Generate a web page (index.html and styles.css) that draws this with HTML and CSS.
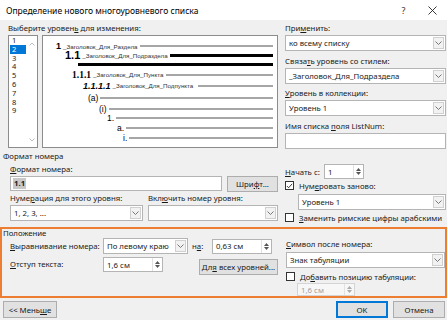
FILE: index.html
```html
<!DOCTYPE html>
<html lang="ru">
<head>
  <meta charset="UTF-8">
  <title>Определение нового многоуровневого списка</title>
  <link rel="stylesheet" href="styles.css">
</head>
<body>
  <div class="dialog">
    <div class="titlebar">
      <div class="title">Определение нового многоуровневого списка</div>
      <div class="tb-btn">?</div>
      <div class="tb-btn">
        <svg width="9" height="9" viewBox="0 0 9 9"><path d="M0.5 0.5 L8.5 8.5 M8.5 0.5 L0.5 8.5" stroke="#222" stroke-width="0.9"/></svg>
      </div>
    </div>

    <!-- выбор уровня и просмотр -->
    <div class="top">
      <div class="pick">
        <div class="caption">Выберите уровен<u>ь</u> для изменения:</div>
        <div class="pick-body">
          <div class="levels">
            <div class="level-items">
              <div class="lv">1</div>
              <div class="lv selected">2</div>
              <div class="lv">3</div>
              <div class="lv">4</div>
              <div class="lv">5</div>
              <div class="lv">6</div>
              <div class="lv">7</div>
              <div class="lv">8</div>
              <div class="lv">9</div>
            </div>
            <div class="scroll">
              <svg width="6" height="4" viewBox="0 0 6 4"><path d="M0.5 3.5 L3 1 L5.5 3.5" fill="none" stroke="#bdbdbd"/></svg>
              <svg width="6" height="4" viewBox="0 0 6 4"><path d="M0.5 0.5 L3 3 L5.5 0.5" fill="none" stroke="#bdbdbd"/></svg>
            </div>
          </div>
          <div class="preview">
            <div class="pv pv1"><b class="n1">1</b><span class="sty s1">_Заголовок_Для_Раздела</span><span class="ln"></span></div>
            <div class="pv pv2"><b class="n2">1.1</b><span class="sty s2">_Заголовок_Для_Подраздела</span><span class="ln thick"></span></div>
            <div class="pv pv3"><span class="ln thick"></span></div>
            <div class="pv pv4"><b class="n3">1.1.1</b><span class="sty s4">_Заголовок_Для_Пункта</span><span class="ln"></span></div>
            <div class="pv pv5"><b class="n4">1.1.1.1</b><span class="sty s5">_Заголовок_Для_Подпункта</span><span class="ln"></span></div>
            <div class="pv pv6"><span class="n">(a)</span><span class="ln"></span></div>
            <div class="pv pv7"><span class="n">(i)</span><span class="ln"></span></div>
            <div class="pv pv8"><span class="n">1.</span><span class="ln"></span></div>
            <div class="pv pv9"><span class="n">a.</span><span class="ln"></span></div>
            <div class="pv pv10"><span class="n">i.</span><span class="ln"></span></div>
          </div>
        </div>
      </div>

      <div class="side">
        <div class="field">
          <div class="caption">При<u>м</u>енить:</div>
          <div class="combo"><span class="val">ко всему списку</span><span class="drop"><svg width="7" height="4" viewBox="0 0 7 4"><path d="M0.5 0.5 L3.5 3.5 L6.5 0.5" fill="none" stroke="#777"/></svg></span></div>
        </div>
        <div class="field">
          <div class="caption">Связа<u>т</u>ь уровень со стилем:</div>
          <div class="combo"><span class="val">_Заголовок_Для_Подраздела</span><span class="drop"><svg width="7" height="4" viewBox="0 0 7 4"><path d="M0.5 0.5 L3.5 3.5 L6.5 0.5" fill="none" stroke="#777"/></svg></span></div>
        </div>
        <div class="field">
          <div class="caption"><u>У</u>ровень в коллекции:</div>
          <div class="combo"><span class="val">Уровень 1</span><span class="drop"><svg width="7" height="4" viewBox="0 0 7 4"><path d="M0.5 0.5 L3.5 3.5 L6.5 0.5" fill="none" stroke="#777"/></svg></span></div>
        </div>
        <div class="field">
          <div class="caption">Имя списка <u>п</u>оля ListNum:</div>
          <div class="textbox"></div>
        </div>
      </div>
    </div>

    <!-- формат номера -->
    <div class="fmt">
      <div class="group-title">Формат номера</div>
      <div class="fmt-body">
        <div class="col">
          <div class="caption"><u>Ф</u>ормат номера:</div>
          <div class="fmt-row">
            <div class="textbox num-format"><span class="hl">1.1</span></div>
            <div class="btn font-btn"><span>Шри<u>ф</u>т...</span></div>
          </div>
          <div class="two">
            <div class="sub">
              <div class="caption small">Нуме<u>р</u>ация для этого уровня:</div>
              <div class="combo"><span class="val">1, 2, 3, ...</span><span class="drop"><svg width="7" height="4" viewBox="0 0 7 4"><path d="M0.5 0.5 L3.5 3.5 L6.5 0.5" fill="none" stroke="#777"/></svg></span></div>
            </div>
            <div class="sub">
              <div class="caption small">Вкл<u>ю</u>чить номер уровня:</div>
              <div class="combo"><span class="val"></span><span class="drop"><svg width="7" height="4" viewBox="0 0 7 4"><path d="M0.5 0.5 L3.5 3.5 L6.5 0.5" fill="none" stroke="#777"/></svg></span></div>
            </div>
          </div>
        </div>
        <div class="col">
          <div class="start-row">
            <span class="start-label"><u>Н</u>ачать с:</span>
            <div class="spin start-spin"><span class="val">1</span><span class="arrows"><svg width="5" height="3" viewBox="0 0 5 3"><path d="M0 3 L2.5 0 L5 3 Z" fill="#555"/></svg><svg width="5" height="3" viewBox="0 0 5 3"><path d="M0 0 L2.5 3 L5 0 Z" fill="#555"/></svg></span></div>
          </div>
          <div class="check-row first">
            <span class="box"><svg width="8" height="8" viewBox="0 0 8 8"><path d="M1 4 L3 6 L7 1.5" fill="none" stroke="#222" stroke-width="1"/></svg></span>
            <span>Нум<u>е</u>ровать заново:</span>
          </div>
          <div class="combo restart"><span class="val">Уровень 1</span><span class="drop"><svg width="7" height="4" viewBox="0 0 7 4"><path d="M0.5 0.5 L3.5 3.5 L6.5 0.5" fill="none" stroke="#777"/></svg></span></div>
          <div class="check-row second">
            <span class="box"></span>
            <span><u>З</u>аменить римские цифры арабскими</span>
          </div>
        </div>
      </div>
    </div>

    <!-- положение -->
    <div class="pos">
      <div class="group-title">Положение</div>
      <div class="pos-body">
        <div class="col">
          <div class="pos-row">
            <span class="pos-label"><u>В</u>ыравнивание номера:</span>
            <div class="combo align"><span class="val">По левому краю</span><span class="drop"><svg width="7" height="4" viewBox="0 0 7 4"><path d="M0.5 0.5 L3.5 3.5 L6.5 0.5" fill="none" stroke="#777"/></svg></span></div>
            <span class="at-label">н<u>а</u>:</span>
            <div class="spin"><span class="val">0,63 см</span><span class="arrows"><svg width="5" height="3" viewBox="0 0 5 3"><path d="M0 3 L2.5 0 L5 3 Z" fill="#555"/></svg><svg width="5" height="3" viewBox="0 0 5 3"><path d="M0 0 L2.5 3 L5 0 Z" fill="#555"/></svg></span></div>
          </div>
          <div class="pos-row second">
            <span class="pos-label"><u>О</u>тступ текста:</span>
            <div class="spin"><span class="val">1,6 см</span><span class="arrows"><svg width="5" height="3" viewBox="0 0 5 3"><path d="M0 3 L2.5 0 L5 3 Z" fill="#555"/></svg><svg width="5" height="3" viewBox="0 0 5 3"><path d="M0 0 L2.5 3 L5 0 Z" fill="#555"/></svg></span></div>
            <div class="btn all-btn"><span>Дл<u>я</u> всех уровней...</span></div>
          </div>
        </div>
        <div class="col">
          <div class="caption"><u>С</u>имвол после номера:</div>
          <div class="combo"><span class="val">Знак табуляции</span><span class="drop"><svg width="7" height="4" viewBox="0 0 7 4"><path d="M0.5 0.5 L3.5 3.5 L6.5 0.5" fill="none" stroke="#777"/></svg></span></div>
          <div class="check-row tab">
            <span class="box"></span>
            <span>До<u>б</u>авить позицию табуляции:</span>
          </div>
          <div class="spin disabled"><span class="val">1,6 см</span><span class="arrows"><svg width="5" height="3" viewBox="0 0 5 3"><path d="M0 3 L2.5 0 L5 3 Z" fill="#aaa"/></svg><svg width="5" height="3" viewBox="0 0 5 3"><path d="M0 0 L2.5 3 L5 0 Z" fill="#aaa"/></svg></span></div>
        </div>
      </div>
    </div>

    <div class="footer">
      <div class="btn less"><span>&lt;&lt; Мень<u>ш</u>е</span></div>
      <div class="spacer"></div>
      <div class="btn ok">OK</div>
      <div class="btn">Отмена</div>
    </div>
  </div>
</body>
</html>
```

FILE: styles.css
```css
* {
  box-sizing: border-box;
}
body {
  margin: 0;
  font-family: "Noto Sans", sans-serif;
  font-size: 7.8px;
  color: #1a1a1a;
  background-color: #f0f0f0;
}
u {
  text-decoration-thickness: 0.5px;
  text-underline-offset: 1px;
}
.dialog {
  width: 447px;
  height: 320px;
  background-color: #f0f0f0;
  overflow: hidden;
}
.titlebar {
  height: 20px;
  background-color: #fff;
  display: flex;
  align-items: center;
  padding-left: 6px;
  font-size: 8.5px;
  color: #000;
}
.titlebar .title {
  flex: 1;
}
.tb-btn {
  width: 29px;
  display: flex;
  justify-content: center;
  align-items: center;
  font-size: 9px;
  color: #333;
}
.caption {
  height: 13px;
  line-height: 13px;
  white-space: nowrap;
}

/* верхняя часть */
.top {
  display: flex;
  gap: 7px;
  height: 130px;
  padding: 2px 1px 0 8px;
}
.pick {
  width: 270px;
}
.pick-body {
  display: flex;
  gap: 4px;
  height: 113px;
}
.levels {
  width: 30px;
  background-color: #fff;
  border: 1px solid #8c8c8c;
  display: flex;
  padding: 0 0 0 1px;
}
.level-items {
  width: 16px;
}
.lv {
  height: 8.8px;
  line-height: 8.8px;
  padding-left: 2px;
  font-size: 7.5px;
}
.lv.selected {
  background-color: #0078d7;
  color: #fff;
}
.scroll {
  flex: 1;
  display: flex;
  flex-direction: column;
  justify-content: space-between;
  align-items: center;
  padding: 6px 0 5px;
}
.preview {
  flex: 1;
  background-color: #fff;
  border: 1px solid #8c8c8c;
  padding: 5.5px 4px 0 0;
}
.pv {
  display: flex;
  align-items: center;
  gap: 2px;
  white-space: nowrap;
  font-family: "Liberation Sans", sans-serif;
  color: #000;
}
.pv1 { height: 9px; padding-left: 13px; }
.pv2 { height: 9.5px; padding-left: 22px; }
.pv3 { height: 9.5px; padding-left: 35px; }
.pv4 { height: 10px; padding-left: 29px; }
.pv5 { height: 12px; padding-left: 40px; }
.pv6 { height: 12px; padding-left: 45px; }
.pv7 { height: 10px; padding-left: 56px; }
.pv8 { height: 9.5px; padding-left: 64px; }
.pv9 { height: 10px; padding-left: 74px; }
.pv10 { height: 10px; padding-left: 80px; }
.n1 {
  font-size: 9px;
}
.n2 {
  font-size: 11px;
}
.n3 {
  font-family: "Liberation Serif", serif;
  font-size: 9.5px;
}
.n4 {
  font-size: 9px;
  font-style: italic;
}
.n {
  font-size: 8.5px;
}
.sty {
  font-size: 6.2px;
  line-height: 9px;
  color: #333;
}
.s1 { width: 75px; }
.s2 { width: 86px; }
.s4 { width: 71px; }
.s5 { width: 83px; }
.ln {
  flex: 1;
  height: 2px;
  background-color: #a6a6a6;
}
.ln.thick {
  height: 3px;
  background-color: #000;
}
.side {
  width: 161px;
}
.field {
  margin-bottom: 3.5px;
}

/* поля ввода */
.combo {
  height: 16px;
  background-color: #fff;
  border: 1px solid #b4b4b4;
  display: flex;
  align-items: center;
}
.combo .val {
  flex: 1;
  padding-left: 3px;
  white-space: nowrap;
  overflow: hidden;
}
.drop {
  width: 11px;
  height: 12px;
  margin-right: 1px;
  border: 1px solid #d0d0d0;
  background-color: #f2f2f2;
  display: flex;
  justify-content: center;
  align-items: center;
}
.textbox {
  height: 16px;
  background-color: #fff;
  border: 1px solid #b4b4b4;
}
.spin {
  width: 60px;
  height: 15px;
  background-color: #fff;
  border: 1px solid #b4b4b4;
  display: flex;
  align-items: center;
}
.spin .val {
  flex: 1;
  padding-left: 3px;
  white-space: nowrap;
}
.arrows {
  width: 10px;
  height: 100%;
  display: flex;
  flex-direction: column;
  justify-content: center;
  align-items: center;
  gap: 1px;
  border-left: 1px solid #e2e2e2;
}
.spin.disabled {
  width: 58px;
  height: 13px;
  margin: 1px 0 0 11px;
  background-color: #f7f7f7;
  border-color: #d4d4d4;
  color: #a0a0a0;
}
.btn {
  height: 16px;
  background-color: #e1e1e1;
  border: 1px solid #adadad;
  display: flex;
  justify-content: center;
  align-items: center;
  white-space: nowrap;
}
.check-row {
  display: flex;
  align-items: center;
  gap: 5px;
  height: 11px;
  white-space: nowrap;
}
.box {
  width: 9px;
  height: 9px;
  background-color: #fff;
  border: 1px solid #333;
  display: flex;
  justify-content: center;
  align-items: center;
}

/* формат номера */
.fmt {
  height: 77px;
}
.group-title {
  height: 12px;
  line-height: 12px;
  padding-left: 3px;
}
.fmt-body {
  display: grid;
  grid-template-columns: 268px 161px;
  column-gap: 7px;
  padding-left: 10px;
}
.fmt-body .caption {
  line-height: 14px;
  height: 14px;
}
.fmt-row {
  display: flex;
  gap: 5px;
  height: 16px;
}
.num-format {
  flex: 1;
  height: 15px;
  display: flex;
  align-items: center;
  padding-left: 2px;
}
.hl {
  background-color: #c8c8c8;
  font-weight: bold;
  padding: 0 1px;
  line-height: 11px;
}
.font-btn {
  width: 51px;
}
.two {
  display: flex;
  gap: 5px;
}
.two .sub {
  width: 133px;
}
.two .sub + .sub {
  width: 130px;
}
.fmt-body .caption.small {
  height: 12px;
  line-height: 12px;
  margin-bottom: 1px;
}
.start-row {
  display: flex;
  align-items: center;
  height: 15px;
  margin-top: 2px;
}
.start-label {
  width: 39px;
}
.start-spin {
  width: 40px;
}
.check-row.first {
  margin-top: 1px;
}
.combo.restart {
  margin: 3px 0 0 13px;
}
.check-row.second {
  margin-top: 2px;
}

/* положение */
.pos {
  height: 71px;
  border: 2px solid #ed7d31;
}
.pos .group-title {
  height: 9px;
  line-height: 9px;
  padding-left: 1px;
}
.pos-body {
  display: grid;
  grid-template-columns: 270px 159px;
  column-gap: 6px;
  padding-left: 8px;
}
.pos-row {
  display: flex;
  align-items: center;
  height: 16px;
}
.pos-row.second {
  margin-top: 3px;
  align-items: flex-start;
  height: 18px;
}
.pos-row.second .pos-label {
  line-height: 15px;
}
.pos-label {
  width: 93px;
  white-space: nowrap;
}
.combo.align {
  width: 85px;
}
.at-label {
  width: 20px;
  margin-left: 4px;
}
.all-btn {
  width: 79px;
  margin: 2px 0 0 36px;
}
.pos-body .combo {
  margin-top: 1px;
}
.pos-body .combo.align {
  margin-top: 0;
}
.check-row.tab {
  margin-top: 3px;
}

/* кнопки внизу */
.footer {
  display: flex;
  gap: 5px;
  margin-top: 3px;
  padding: 0 2px 0 3px;
}
.footer .btn {
  width: 52px;
  height: 17px;
}
.footer .btn.less {
  width: 54px;
}
.spacer {
  flex: 1;
}
.btn.ok {
  border: 2px solid #0078d7;
}
```
